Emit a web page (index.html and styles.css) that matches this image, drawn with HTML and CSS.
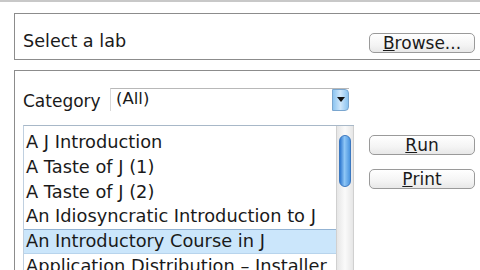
FILE: index.html
```html
<!DOCTYPE html>
<html>
<head>
<meta charset="utf-8">
<link rel="stylesheet" href="styles.css">
</head>
<body>
<div class="topline"></div>
<div class="page">
  <div class="panel lab">
    <span class="label">Select a lab</span>
    <button class="btn browse"><u>B</u>rowse...</button>
  </div>
  <div class="panel main">
    <div class="catrow">
      <span class="label">Category</span>
      <div class="combo">
        <span class="combo-text">(All)</span>
        <span class="combo-btn"><svg width="8" height="5" viewBox="0 0 8 5"><path d="M0 0H8L4 5Z" fill="#111"/></svg></span>
      </div>
    </div>
    <div class="listrow">
      <div class="list">
        <div class="items">
          <div class="item">A J Introduction</div>
          <div class="item">A Taste of J (1)</div>
          <div class="item">A Taste of J (2)</div>
          <div class="item">An Idiosyncratic Introduction to J</div>
          <div class="item sel">An Introductory Course in J</div>
          <div class="item">Application Distribution – Installer</div>
        </div>
        <div class="scroll"><div class="thumb"></div></div>
      </div>
      <div class="buttons">
        <button class="btn"><u>R</u>un</button>
        <button class="btn"><u>P</u>rint</button>
      </div>
    </div>
  </div>
</div>
</body>
</html>
```
FILE: styles.css
```css
html, body {
  margin: 0;
  padding: 0;
  background: #fff;
  overflow: hidden;
  width: 480px;
  height: 270px;
}
body {
  font-family: "DejaVu Sans", "Liberation Sans", sans-serif;
  color: #1a1a1a;
}
.topline {
  height: 2px;
  background: #c8c8c8;
}
.page {
  padding-left: 14px;
  padding-top: 11px;
}
.panel {
  border: 1px solid #8c8c8c;
  border-right: none;
  width: 500px;
  box-sizing: border-box;
}
.lab {
  height: 47px;
  display: flex;
  align-items: center;
  padding-left: 8px;
}
.label {
  font-size: 17.6px;
}
.lab .label {
  width: 346px;
  margin-top: 9px;
}
.btn {
  width: 106px;
  height: 20px;
  border: 1px solid #9a9a9a;
  border-radius: 5px;
  background: linear-gradient(#fff, #f4f4f4 60%, #e8e8e8);
  font-family: "DejaVu Sans", sans-serif;
  font-size: 17px;
  color: #1a1a1a;
  padding: 0;
  line-height: 18px;
  display: flex;
  align-items: center;
  justify-content: center;
}
.browse {
  margin-top: 13px;
}
.main {
  margin-top: 10px;
  height: 220px;
  padding: 16px 0 0 8px;
}
.catrow {
  display: flex;
  align-items: center;
  height: 24px;
}
.catrow .label {
  width: 87px;
  margin-top: 4px;
  font-size: 17px;
}
.combo {
  width: 239px;
  height: 23px;
  display: flex;
  border-top: 1px solid #b8b8b8;
  border-left: 1px solid #d8d8d8;
  box-sizing: border-box;
}
.combo-text {
  flex: 1;
  font-size: 16.5px;
  padding-left: 5px;
  line-height: 20px;
}
.combo-btn {
  width: 17px;
  background: linear-gradient(90deg, #8cc4f0, #cfe7fb 50%, #8cc4f0);
  border-radius: 0 4px 4px 0;
  border: 1px solid #7aa6cf;
  display: flex;
  align-items: center;
  justify-content: center;
  box-sizing: border-box;
}
.listrow {
  display: flex;
  margin-top: 14px;
}
.list {
  width: 331px;
  height: 160px;
  border-top: 1px solid #a8b8c8;
  border-left: 1px solid #c0d0e0;
  display: flex;
  box-sizing: border-box;
}
.items {
  flex: 1;
  min-width: 0;
  padding-top: 4px;
}
.item {
  height: 24.8px;
  line-height: 24px;
  font-size: 17.8px;
  padding-left: 2px;
  white-space: nowrap;
  overflow: hidden;
  box-sizing: border-box;
}
.item.sel {
  background: #cbe6fb;
  border-top: 1px solid #93b3d3;
  border-bottom: 1px solid #b8d4ec;
  line-height: 22px;
}
.scroll {
  width: 18px;
  flex: none;
  background: linear-gradient(90deg, #e6e6e6, #fafafa 50%, #e6e6e6);
  border-left: 1px solid #d0d0d0;
  border-right: 1px solid #d0d0d0;
  padding-top: 9px;
  box-sizing: border-box;
}
.thumb {
  width: 12px;
  height: 52px;
  margin-left: 2px;
  border-radius: 6px;
  background: linear-gradient(90deg, #2f78d0, #8ec6f6 45%, #4b95e0);
  border: 1px solid #3c78c0;
  box-sizing: border-box;
}
.buttons {
  display: flex;
  flex-direction: column;
  gap: 14px;
  margin-left: 15px;
  margin-top: 10px;
}
```
